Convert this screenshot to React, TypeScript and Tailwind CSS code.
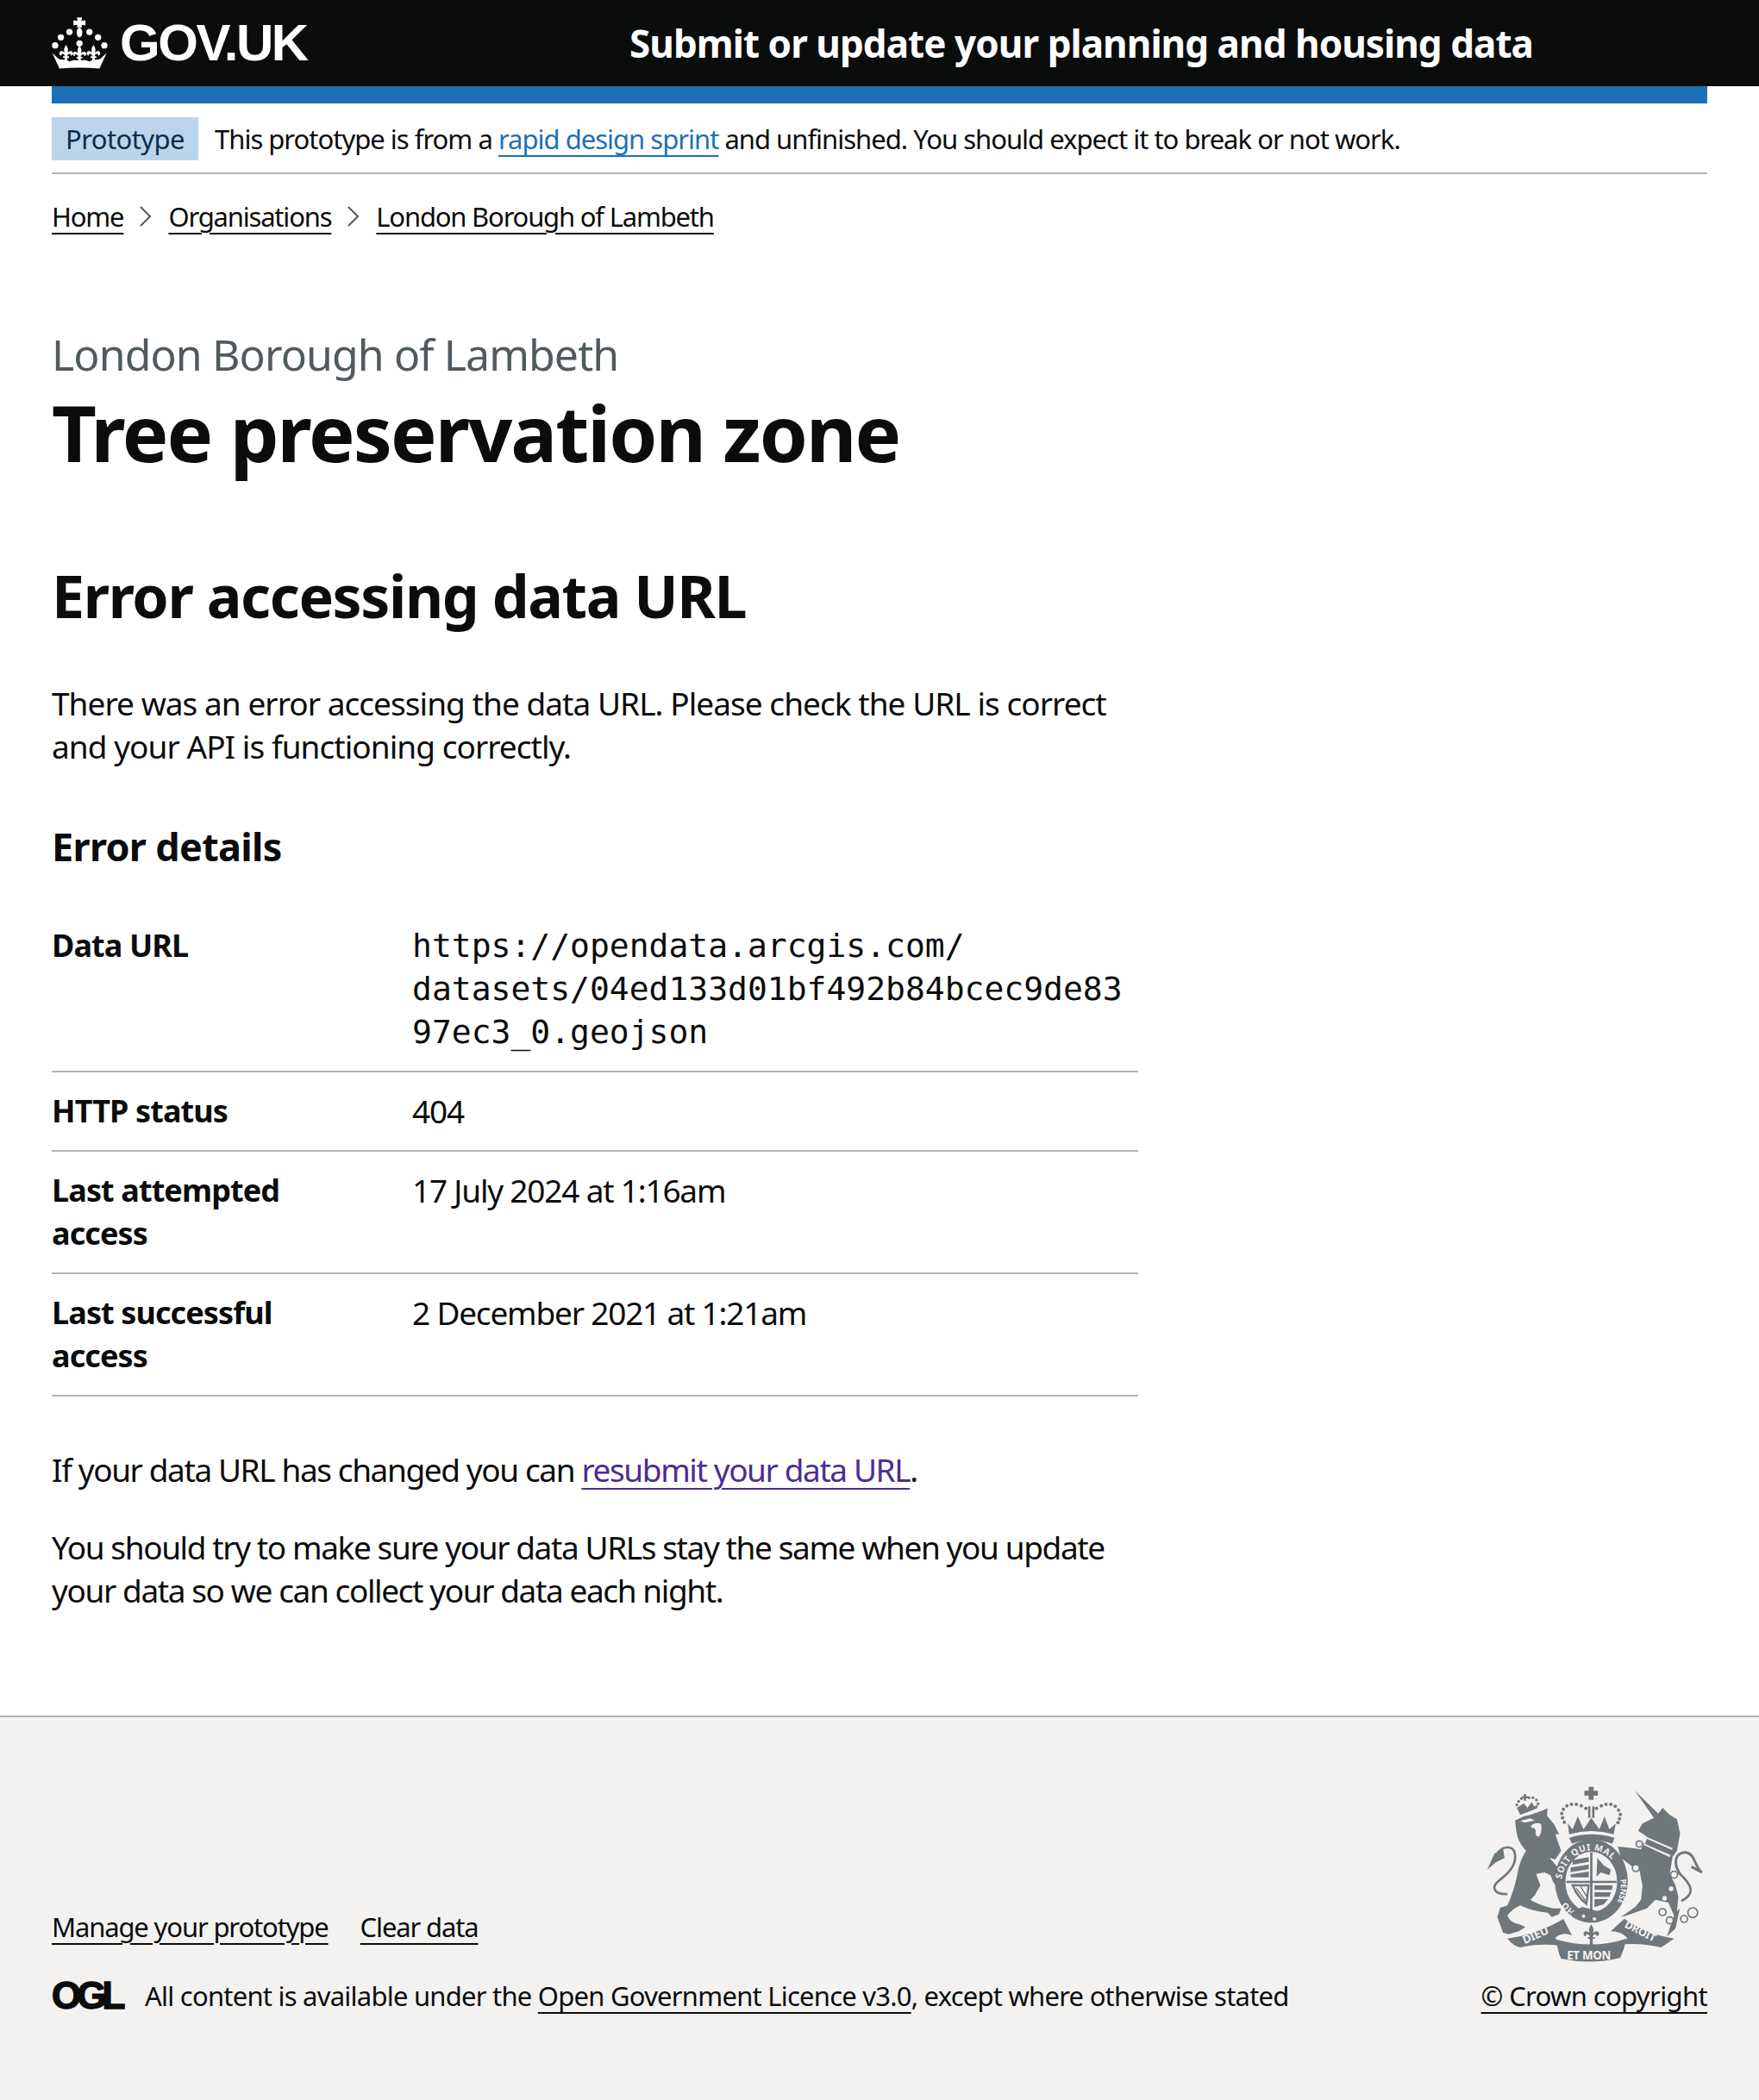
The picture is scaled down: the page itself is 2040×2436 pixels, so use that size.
const body = "font-['Noto_Sans',sans-serif]";

function Fleur({ x, y, s = 1 }: { x: number; y: number; s?: number }) {
  return (
    <g transform={`translate(${x} ${y}) scale(${s})`}>
      <path d="M0-28C7-18 7-12 4-4 8-10 16-12 20-6 22-1 19 4 14 4 15 0 13-2 9-1 6 0 4 3 4 6H9V11H4V30H-4V11H-9V6H-4C-4 3-6 0-9-1-13-2-15 0-14 4-19 4-22-1-20-6-16-12-8-10-4-4-7-12-7-18 0-28Z" />
    </g>
  );
}

function Crown() {
  const dots = [[40, 125], [60, 97], [90, 78], [160, 78], [190, 97], [212, 125], [125, 118]];
  return (
    <svg viewBox="28 27 196 180" className="w-[65px] h-[60px] shrink-0" fill="#fff">
      {dots.map(([x, y]) => (
        <circle key={`${x}-${y}`} cx={x} cy={y} r="11" />
      ))}
      <path d="M116 27H134L132 39 146 37V55L132 53 134 62H116L118 53 104 55V37L118 39Z" />
      <ellipse cx="125" cy="80" rx="10" ry="17" />
      <Fleur x={78} y={156} s={1.15} />
      <Fleur x={125} y={158} s={1.15} />
      <Fleur x={174} y={156} s={1.15} />
      <path d="M30 152 52 172C66 178 78 172 90 182 102 174 112 176 125 178 138 176 148 174 160 182 172 172 184 178 198 172L220 152 195 206Q125 200 55 206Z" />
    </svg>
  );
}

function Crest() {
  const c = "#6f777b";
  const bg = "#f3f2f1";
  const dots: number[][] = [
    [397, 205], [394, 190], [400, 175], [412, 163], [428, 158], [445, 158], [462, 163], [478, 172],
    [515, 172], [532, 163], [548, 158], [565, 158], [580, 165], [592, 178], [598, 193], [595, 208], [403, 220], [590, 222],
  ];
  const lionDots: number[][] = [[238, 160], [244, 148], [254, 138], [266, 133], [280, 135], [294, 135], [306, 143], [312, 156]];
  return (
    <svg viewBox="130 95 755 615" className="w-[252px] h-[205px]" fill={c}>
      {/* lion */}
      <path d="M232 214 262 200Q305 190 345 172L343 198 368 228 385 262 372 262 392 320 372 350 352 345 378 375 395 405 405 440 385 452 365 430 355 405 335 395 305 400 320 440 300 475 285 490Q320 512 365 520L392 520 385 540 360 550 345 535Q290 530 250 510 225 520 205 545 215 570 245 575L268 585 245 600 210 610 190 605 170 550 180 518 205 510Q228 460 240 400 245 360 270 320 250 300 240 270L235 245Z" />
      <path d="M205 470C165 472 140 450 180 420 220 390 240 360 230 325 224 305 195 300 172 325" fill="none" stroke={c} strokeWidth="8" />
      <path d="M190 312 160 330 135 385 165 360 195 345Z" />
      {lionDots.map(([x, y]) => (
        <circle key={`${x}-${y}`} cx={x} cy={y} r="5" />
      ))}
      <path d="M262 122h8v8h7v7h-7v8h-8v-8h-7v-7h7z" />
      <path d="M238 170 262 155 275 170 290 150 298 165 312 160 308 172 250 195Z" />
      <path d="M288 232Q305 218 322 226 328 250 316 270 300 272 304 250 300 238 288 240Z" fill={bg} />
      <path d="M250 216 285 207 300 214 265 222Z" fill={bg} />
      {/* crown */}
      {dots.map(([x, y]) => (
        <circle key={`${x}-${y}`} cx={x} cy={y} r="6" />
      ))}
      <path d="M488 97h17v14h15v17h-15v14h-17v-14h-15v-17h15z" />
      <path d="M486 165h8v40h-8zM500 165h8v40h-8z" />
      <path d="M415 225 432 245 450 200 470 245 497 205 525 245 543 200 560 245 582 225 575 262Q497 240 420 262Z" />
      <path d="M420 275Q497 250 578 275L570 295Q497 270 430 295Z" />
      {/* garter */}
      <ellipse cx="497" cy="425" rx="127" ry="145" />
      <ellipse cx="497" cy="428" rx="90" ry="105" fill={bg} />
      <path id="crest-top" d="M392 440A105 122 0 0 1 602 440" fill="none" />
      <text fontFamily="'Noto Sans',sans-serif" fontSize="31" fontWeight="700" letterSpacing="2" fill={bg}>
        <textPath href="#crest-top" startOffset="6%">SOIT QUI MAL</textPath>
      </text>
      <path id="crest-left" d="M440 530A110 115 0 0 1 392 440" fill="none" />
      <text fontFamily="'Noto Sans',sans-serif" fontSize="30" fontWeight="700" fill={bg}>
        <textPath href="#crest-left">HO</textPath>
      </text>
      <path id="crest-right" d="M598 420A110 120 0 0 1 560 535" fill="none" />
      <text fontFamily="'Noto Sans',sans-serif" fontSize="27" fontWeight="700" fill={bg}>
        <textPath href="#crest-right">PENSE</textPath>
      </text>
      <path d="M493 325h8v205h-8zM410 424h175v8H410z" />
      <path d="M432 352 488 342V358L432 368ZM425 378 488 368V384L425 394ZM425 402 488 392V412H425Z" />
      <path d="M518 345 540 370 565 385 560 405 530 395 515 410Z" />
      <path d="M432 440 488 440 480 505Q450 480 432 440Z" fill="none" stroke={c} strokeWidth="7" />
      <path d="M445 450 478 495M460 445 482 480M440 462 470 498" stroke={c} strokeWidth="4" fill="none" />
      <path d="M508 440H572L568 456H508ZM508 464H566L560 480H508ZM508 488H556L540 506 508 516Z" />
      <path d="M420 540 465 515 540 535 500 560Z" />
      <circle cx="470" cy="547" r="6" fill={bg} />
      <circle cx="508" cy="557" r="6" fill={bg} />
      {/* unicorn */}
      <path d="M648 110 730 190 745 170 770 195 795 210 806 260 795 320 780 340 770 400 790 440 800 480 795 530 805 520 790 590 760 618 785 545 765 500 720 490 690 520 620 545 600 550 650 515 670 490 675 440 665 390 640 375 600 345 590 305 640 310 670 315 690 270 660 250 675 225 715 205Z" />
      <path d="M685 270 780 310 770 342 680 300Z" fill={bg} />
      <path d="M690 278 780 318 772 334 684 296Z" />
      <path d="M800 395C850 440 860 470 810 495" fill="none" stroke={c} strokeWidth="8" />
      <path d="M805 400C780 360 790 325 825 325 860 330 855 375 882 395L845 375" fill="none" stroke={c} strokeWidth="9" />
      {[[664, 296, 11], [652, 380, 12], [785, 403, 12], [745, 533, 12], [770, 562, 12], [820, 557, 12], [850, 535, 17]].map(([x, y, r]) => (
        <circle key={`${x}-${y}`} cx={x} cy={y} r={r} fill={bg} stroke={c} strokeWidth="5" />
      ))}
      <circle cx="775" cy="452" r="8" fill={bg} />
      <circle cx="752" cy="485" r="8" fill={bg} />
      {/* motto */}
      <path d="M205 625Q310 610 400 557L430 615Q400 600 372 622L388 650Q320 640 250 656 225 650 205 625Z" />
      <path d="M785 625Q690 610 612 556L565 600Q600 600 622 622L612 645Q670 640 740 656Z" />
      <path d="M375 628Q380 670 392 695 497 718 598 692 612 660 620 625 500 665 375 628Z" />
      <path id="ribbon-left" d="M265 645 390 590" fill="none" />
      <text fontFamily="'Noto Sans',sans-serif" fontSize="40" fontWeight="700" fill={bg}>
        <textPath href="#ribbon-left">DIEU</textPath>
      </text>
      <path id="ribbon-right" d="M610 585 740 650" fill="none" />
      <text fontFamily="'Noto Sans',sans-serif" fontSize="38" fontWeight="700" fill={bg}>
        <textPath href="#ribbon-right">DROIT</textPath>
      </text>
      <text x="412" y="697" fontFamily="'Noto Sans',sans-serif" fontSize="40" fontWeight="700" fill={bg}>ET MON</text>
      <Fleur x={497} y={612} s={1.3} />
    </svg>
  );
}

function Chevron() {
  return (
    <svg viewBox="0 0 14 24" className="w-[14px] h-6 mx-[19px] shrink-0" fill="none" stroke="#505a5f" strokeWidth="2">
      <path d="M1 1l11 11L1 23" />
    </svg>
  );
}

const u = "underline decoration-2 underline-offset-[7px]";
const para = "text-[37px] leading-[50px] tracking-[-0.95px]";
const paraTight = "text-[37px] leading-[50px] tracking-[-1.4px]";

const rows = [
  { label: "HTTP status", value: "404" },
  { label: "Last attempted access", value: "17 July 2024 at 1:16am" },
  { label: "Last successful access", value: "2 December 2021 at 1:21am" },
];

export default function App() {
  return (
    <div className={`${body} text-[#0b0c0c] bg-white min-h-[2436px] flex flex-col`}>
      <header className="h-[100px] bg-[#0b0c0c] text-white flex items-center px-[60px]">
        <div className="w-[670px] flex items-center gap-[14px]">
          <Crown />
          <span className="text-[60px] font-bold font-['Liberation_Sans',sans-serif] tracking-[-2.4px]">GOV.UK</span>
        </div>
        <span className="text-[44px] font-bold tracking-[-0.95px]">Submit or update your planning and housing data</span>
      </header>

      <div className="mx-[60px] h-5 bg-[#1d70b8]" />

      <div className="mx-[60px] mt-4 pb-[14px] border-b-2 border-[#b1b4b6] flex items-center text-[31px] leading-[46px] tracking-[-1px]">
        <strong className="h-[50px] w-[170px] pl-4 flex items-center font-normal tracking-[-0.6px] bg-[#bbd4ea] text-[#0c2d4a]">Prototype</strong>
        <span className="ml-[19px]">
          This prototype is from a <a className={`${u} text-[#1d70b8]`}>rapid design sprint</a> and unfinished. You should expect it to break or not work.
        </span>
      </div>

      <nav className="mx-[60px] mt-[29px] flex items-center h-10 text-[31px] tracking-[-1.2px]">
        <a className={u}>Home</a>
        <Chevron />
        <a className={u}>Organisations</a>
        <Chevron />
        <a className={u}>London Borough of Lambeth</a>
      </nav>

      <main className="mx-[60px] mt-[110px] flex-1">
        <div className="text-[50px] leading-[60px] text-[#505a5f] tracking-[-0.9px]">London Borough of Lambeth</div>
        <h1 className="text-[90px] leading-[100px] font-bold tracking-[-2px] mt-[10px]">Tree preservation zone</h1>

        <div className="w-[1260px]">
          <h2 className="text-[68px] leading-[80px] font-bold tracking-[-1.4px] mt-[100px]">Error accessing data URL</h2>
          <p className={`${para} mt-[60px]`}>
            There was an error accessing the data URL. Please check the URL is correct and your API is functioning correctly.
          </p>
          <h3 className="text-[45px] leading-[60px] font-bold tracking-[-0.7px] mt-[61px]">Error details</h3>

          <dl className="mt-[60px] text-[37px] leading-[50px] tracking-[-1.2px]">
            <div className="flex border-b-2 border-[#b1b4b6] pb-5">
              <dt className="w-[418px] text-[36px] tracking-[-0.9px] font-bold shrink-0">Data URL</dt>
              <dd className="flex-1 text-[38px] font-['DejaVu_Sans_Mono',monospace] tracking-normal">
                https://opendata.arcgis.com/<br />datasets/04ed133d01bf492b84bcec9de83<br />97ec3_0.geojson
              </dd>
            </div>
            {rows.map((row) => (
              <div key={row.label} className="flex border-b-2 border-[#b1b4b6] py-5">
                <dt className="w-[418px] pr-[60px] text-[36px] tracking-[-0.9px] font-bold shrink-0">{row.label}</dt>
                <dd className="flex-1">{row.value}</dd>
              </div>
            ))}
          </dl>

          <p className={`${paraTight} mt-[60px]`}>
            If your data URL has changed you can <a className={`${u} text-[#4c2c92]`}>resubmit your data URL</a>.
          </p>
          <p className={`${paraTight} mt-10`}>
            You should try to make sure your data URLs stay the same when you update your data so we can collect your data each night.
          </p>
        </div>
      </main>

      <footer className="h-[446px] bg-[#f3f2f1] border-t-2 border-[#b1b4b6] px-[60px] pt-[80px] flex justify-between text-[31px] tracking-[-0.77px]">
        <div className="mt-[143px]">
          <div className="flex gap-[37px] h-10 items-center tracking-[-1.15px]">
            <a className={u}>Manage your prototype</a>
            <a className={u}>Clear data</a>
          </div>
          <div className="flex items-center mt-[37px]">
            <span className="w-[82px] text-[44px] leading-10 font-bold font-['Liberation_Sans',sans-serif] tracking-[-5px] mr-[26px] [-webkit-text-stroke:1.5px_#0b0c0c]">OGL</span>
            <span>
              All content is available under the <a className={u}>Open Government Licence v3.0</a>, except where otherwise stated
            </span>
          </div>
        </div>
        <div className="flex flex-col items-end">
          <div className="mr-[5px]">
            <Crest />
          </div>
          <a className={`${u} mt-[15px] tracking-[-0.65px]`}>© Crown copyright</a>
        </div>
      </footer>
    </div>
  );
}
